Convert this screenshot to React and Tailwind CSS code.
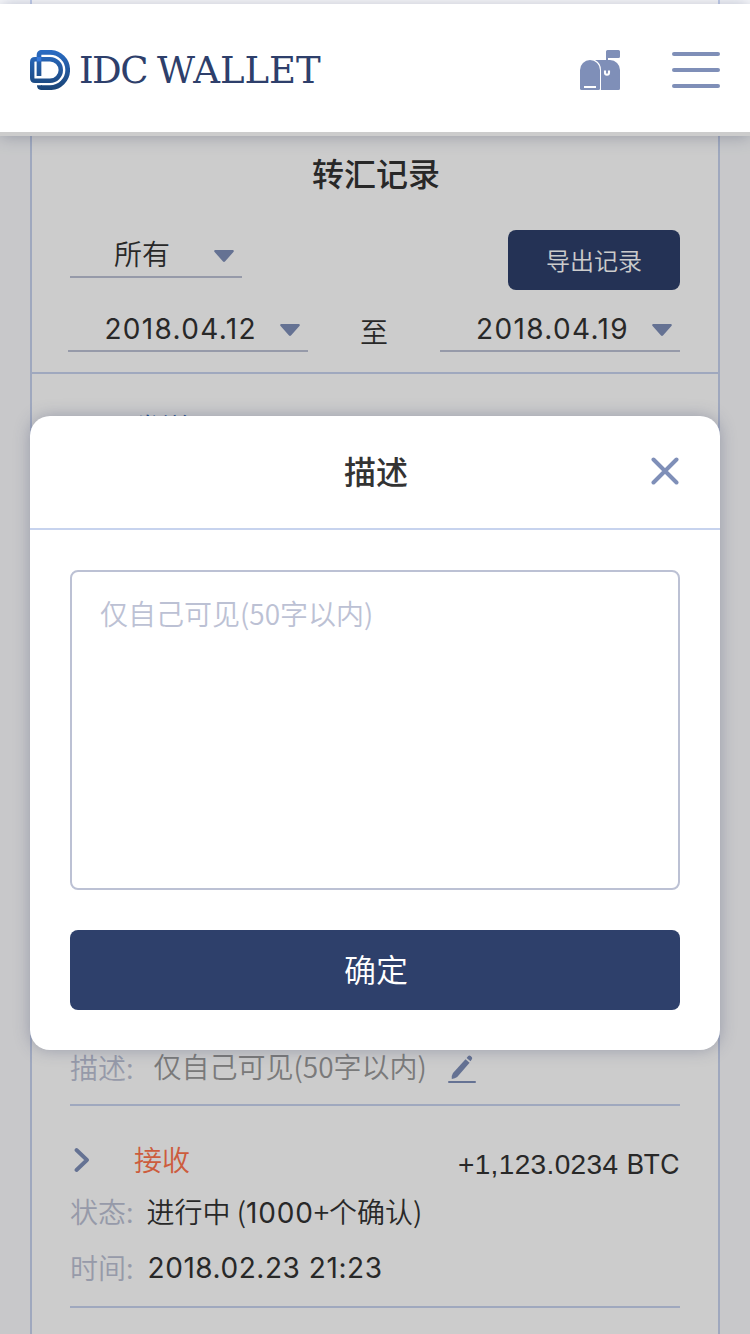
import React from "react";

function Logo() {
  return (
    <svg width="40" height="40" viewBox="0 0 40 40" fill="none" strokeLinecap="butt">
      <defs>
        <linearGradient id="logoBlue" x1="0" y1="0" x2="0" y2="40" gradientUnits="userSpaceOnUse">
          <stop offset="0" stopColor="#2a6cc4" />
          <stop offset="1" stopColor="#1a4476" />
        </linearGradient>
      </defs>
      <path d="M9 26V5Q9 2.300 11.500 2.300H20A17.700 17.700 0 0 1 20 37.700H11" stroke="url(#logoBlue)" strokeWidth="4.700" />
      <path d="M7 35.350H12V40H11Q7 40 7 35.350Z" fill="url(#logoBlue)" />
      <path d="M5 9.200H20A10.800 10.800 0 0 1 20 30.800H5Q2.200 30.800 2.200 28V12Q2.200 9.200 5 9.200Z" stroke="url(#logoBlue)" strokeWidth="4.400" />
      <rect x="6.800" y="7" width="4.500" height="4.400" fill="#3478dc" />
    </svg>
  );
}

function Mailbox() {
  return (
    <svg width="40" height="40" viewBox="0 0 40 40" fill="#7f8fb8">
      <path d="M26 11V1.500Q26 0 27.500 0H38.500Q40 0 40 1.500V6.500Q40 8 38.500 8H28V11Z" />
      <path d="M0 20A10 10 0 0 1 20 20V38.500Q20 40 18.500 40H1.500Q0 40 0 38.500Z" />
      <path d="M15 10H30A10 10 0 0 1 40 20V38.500Q40 40 38.500 40H21V20Q21 13 15 10Z" />
      <path d="M4 36H16V38H4Z" fill="#fff" />
      <path d="M25 20.500V22.700A2 2 0 0 0 29 22.700V20.500" fill="none" stroke="#fff" strokeWidth="2.100" />
    </svg>
  );
}

function Caret() {
  return (
    <svg width="20" height="12" viewBox="0 0 20 12" fill="#7f8fb8">
      <path d="M1 0H19Q20.500 .8 19.400 2L11.200 11.300Q10 12.500 8.800 11.300L.6 2Q-.5 .8 1 0Z" />
    </svg>
  );
}

function DateField({ value }) {
  return (
    <div className="flex h-[42px] w-[240px] items-center justify-end border-b-2 border-[#bcc1d4] pr-2">
      <span className="mr-[23px] whitespace-nowrap pb-[3px] font-[Inter,'Noto_Sans_CJK_SC',sans-serif] text-[28px] leading-[38px] tracking-[1.350px]">{value}</span>
      <Caret />
    </div>
  );
}

function Label({ children }) {
  return <span className="font-[350] text-[#bcc1d4]">{children}</span>;
}

function Records() {
  return (
    <main className="mx-[30px] h-[1334px] border-x-2 border-[#c7d3ee] bg-white text-[28px] text-[#333]">
      <section className="h-[374px] border-b-2 border-[#c7d3ee] px-[38px] pt-[148px]">
        <h1 className="pl-[2px] text-center text-[32px] font-medium leading-[48px]">转汇记录</h1>
        <div className="mt-[34px] flex h-[60px] justify-between">
          <div className="flex h-[48px] w-[172px] items-center justify-end border-b-2 border-[#bcc1d4] pr-2">
            <span className="mr-[44px] font-[350] leading-[46px]">所有</span>
            <div className="pt-[5px]"><Caret /></div>
          </div>
          <button className="h-[60px] w-[172px] rounded-lg bg-[#2d3f6b] text-[24px] font-[350] text-white">导出记录</button>
        </div>
        <div className="-ml-[2px] mt-[20px] flex h-[42px] items-center justify-between">
          <DateField value="2018.04.12" />
          <span className="font-[350]">至</span>
          <DateField value="2018.04.19" />
        </div>
      </section>
      <section className="px-[38px]">
        <article className="flex h-[732px] flex-col justify-between border-b-2 border-[#c7d3ee] pb-[16px] pt-[32px]">
          <div className="pl-16 font-[350] leading-[42px] text-[#2a62b0]">发送</div>
          <div className="flex items-center leading-[42px]">
            <div className="pt-[2px]"><Label>描述:</Label></div>
            <span className="ml-[20px] font-[350] text-[#999]">仅自己可见(50字以内)</span>
            <svg className="ml-[21px] mt-[5px]" width="28" height="28" viewBox="0 0 28 28" fill="#7f8fb8">
              <rect x="0" y="26" width="28" height="2" rx="1" />
              <path d="M17.500 4.200L21.600 7.800L9.200 22Q7 23.600 3.800 24Q3.300 20.500 5 18Z" />
              <path d="M18.600 2.900L20 1.200Q21.200 -.2 22.700 1L23.600 1.900Q24.700 3 23.700 4.400L22.500 6.200Z" />
            </svg>
          </div>
        </article>
        <article className="h-[202px] border-b-2 border-[#c7d3ee] pt-[32px] leading-[42px]">
          <div className="flex h-[44px] items-center">
            <svg className="ml-1" width="16" height="26" viewBox="0 0 16 26" fill="none" stroke="#7f8fb8" strokeWidth="3.800" strokeLinecap="round" strokeLinejoin="round">
              <path d="M2.500 3L13 13L2.500 23" />
            </svg>
            <span className="-mt-[3px] ml-[44px] font-[350] text-[#ff744d]">接收</span>
            <span className="ml-auto pt-[10px] font-['Liberation_Sans',Arial,sans-serif] tracking-[0.350px]">+1,123.0234 <span className="font-[Inter,sans-serif] text-[27px]">BTC</span></span>
          </div>
          <div className="mt-[8px] flex h-[42px] items-center">
            <Label>状态:</Label>
            <span className="ml-[13px] whitespace-pre pt-[1px] font-[350]">进行中 (<span className="font-[Inter,sans-serif] font-normal tracking-[0.800px]">1000</span>+个确认)</span>
          </div>
          <div className="mt-[14px] flex h-[42px] items-center">
            <Label>时间:</Label>
            <span className="ml-[14px] pt-[2px] font-[Inter,sans-serif] tracking-[0.550px]">2018.02.23 21:23</span>
          </div>
        </article>
      </section>
    </main>
  );
}

export default function App() {
  return (
    <div className="relative h-[1334px] w-[750px] overflow-hidden bg-[#fafbfd] font-['Noto_Sans_CJK_SC',sans-serif]">
      <Records />
      <header className="absolute inset-x-0 top-1 flex h-[132px] items-center bg-white px-[30px] shadow-[0_0_16px_rgba(60,70,110,0.35)]">
        <Logo />
        <div className="ml-[9px] flex whitespace-nowrap pt-[2px] font-['DejaVu_Serif',serif] text-[37px] leading-[44px] text-[#2e3f6b]">
          <span className="w-[78px] tracking-[-1.500px]">IDC</span>
          <span>WALLET</span>
        </div>
        <div className="ml-auto flex items-center gap-[52px]">
          <Mailbox />
          <div className="flex flex-col gap-[12px]">
            <i className="h-[4px] w-[48px] rounded-full bg-[#7f8fb8]" />
            <i className="h-[4px] w-[48px] rounded-full bg-[#7f8fb8]" />
            <i className="h-[4px] w-[48px] rounded-full bg-[#7f8fb8]" />
          </div>
        </div>
      </header>
      <div className="absolute inset-x-0 bottom-0 top-[132px] bg-black/20" />
      <div role="dialog" className="absolute left-[30px] top-[416px] h-[634px] w-[690px] rounded-[20px] bg-white shadow-[0_0_16px_rgba(60,70,110,0.35)]">
        <div className="grid h-[114px] grid-cols-[1fr_auto_1fr] items-center border-b-2 border-[#c7d3ee] px-[40px]">
          <span />
          <h2 className="pb-[4px] pl-[2px] text-[32px] font-medium leading-[48px] text-[#333]">描述</h2>
          <svg className="justify-self-end" width="30" height="30" viewBox="0 0 30 30" stroke="#7f8fb8" strokeWidth="4" strokeLinecap="round">
            <path d="M3.500 2.500L26.500 25.500M26.500 2.500L3.500 25.500" />
          </svg>
        </div>
        <div className="flex flex-col gap-[40px] p-[40px]">
          <div className="h-[320px] rounded-lg border-2 border-[#bcc1d4] px-[28px] py-[20px] text-[28px] font-[350] leading-[42px] text-[#bcc1d4]">仅自己可见(50字以内)</div>
          <button className="h-[80px] rounded-lg bg-[#2e406b] pb-[4px] pl-[2px] text-[32px] font-[350] text-white">确定</button>
        </div>
      </div>
    </div>
  );
}
